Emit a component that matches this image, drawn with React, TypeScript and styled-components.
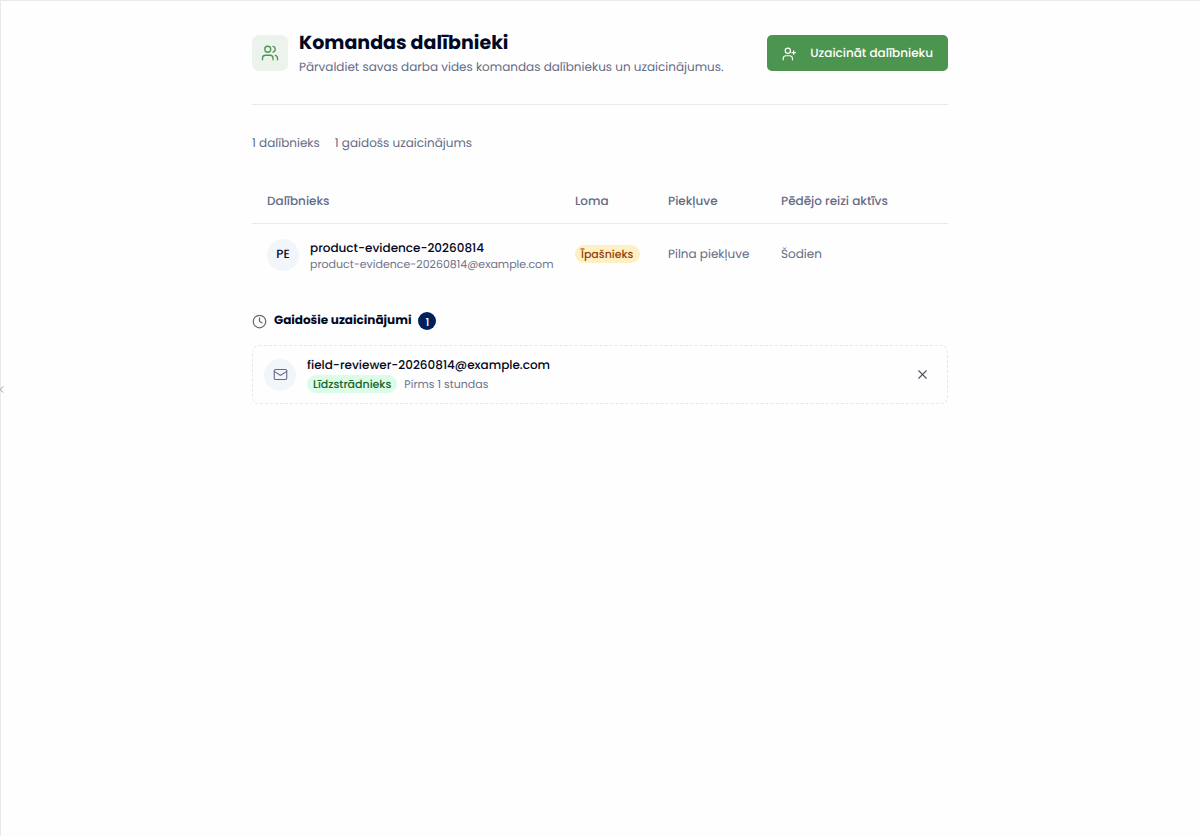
import React from "react";
import styled, { createGlobalStyle } from "styled-components";
import { ChevronLeft, Clock, Mail, Users, X } from "lucide-react";

const GlobalStyle = createGlobalStyle`
  * { box-sizing: border-box; }
  body {
    margin: 0;
    background: #fefefe;
    color: #020824;
    font-family: Poppins, Inter, "Open Sans", sans-serif;
    font-size: 12px;
    line-height: 20px;
    text-rendering: geometricPrecision;
    -webkit-font-smoothing: antialiased;
  }
  button { text-rendering: inherit; }
  h1, h2, p, ul { margin: 0; padding: 0; }
`;

const Shell = styled.div`
  position: relative;
  min-height: 100vh;
  box-shadow: inset 1px 1px 0 #e8e9ec;
`;

const CollapseButton = styled.button`
  position: absolute;
  left: -4px;
  top: 384px;
  display: flex;
  padding: 0;
  border: 0;
  background: none;
  color: #8a8d96;
`;

const Page = styled.main`
  max-width: 696px;
  margin: 0 auto;
  padding-top: 28px;
`;

const Header = styled.header`
  display: flex;
  align-items: center;
  justify-content: space-between;
  gap: 12px;
  padding-bottom: 26px;
  border-bottom: 1px solid #e8e9ec;
`;

const HeaderIntro = styled.div`
  display: flex;
  align-items: center;
  gap: 11px;
`;

const IconTile = styled.div`
  display: grid;
  place-items: center;
  flex: none;
  width: 36px;
  height: 36px;
  border-radius: 7px;
  background: #ebf3ec;
  color: #4c9550;
`;

const Title = styled.h1`
  font-size: 19px;
  line-height: 30px;
  font-weight: 700;
`;

const Subtitle = styled.p`
  line-height: 20px;
  color: #646b85;
`;

const InviteButton = styled.button`
  display: flex;
  align-items: center;
  gap: 14px;
  height: 36px;
  padding: 1px 15px 0;
  border: 0;
  border-radius: 5px;
  background: #4c9550;
  color: #ffffff;
  font: inherit;
  font-weight: 500;
  white-space: nowrap;
`;

const Summary = styled.div`
  display: flex;
  gap: 15px;
  padding: 29px 0 25px;
  color: #646b85;
`;

const Table = styled.table`
  width: 100%;
  border-collapse: collapse;
  table-layout: fixed;
  color: #646b85;
  white-space: nowrap;
`;

const HeadCell = styled.th<{ $width?: string }>`
  width: ${(p) => p.$width ?? "auto"};
  height: 44px;
  padding: 3px 15px 0;
  border-bottom: 1px solid #e8e9ec;
  font-weight: 500;
  text-align: left;
`;

const Cell = styled.td`
  height: 62px;
  padding: 1px 15px 0;
`;

const Member = styled.div`
  display: flex;
  align-items: center;
  gap: 11px;
`;

const Avatar = styled.span`
  display: grid;
  place-items: center;
  flex: none;
  width: 32px;
  height: 32px;
  border-radius: 50%;
  background: #f2f6fa;
  color: #020824;
  font-weight: 500;
`;

const Name = styled.div`
  padding-top: 1px;
  color: #020824;
  font-weight: 500;
  line-height: 18px;
`;

const Small = styled.div`
  color: #6d7389;
  font-size: 11px;
  line-height: 13px;
`;

const Badge = styled.span<{ $tone: "amber" | "green" }>`
  display: inline-block;
  padding: 0 6px;
  border-radius: 9px;
  background: ${(p) => (p.$tone === "amber" ? "#fef0c3" : "#dbfce6")};
  color: ${(p) => (p.$tone === "amber" ? "#963f0c" : "#166432")};
  font-size: 11px;
  font-weight: 500;
  line-height: 18px;
`;

const Pending = styled.section`
  padding-top: 27px;
`;

const PendingHeader = styled.div`
  display: flex;
  align-items: center;
  gap: 7px;
  padding-bottom: 15px;
  color: #646b75;
`;

const PendingTitle = styled.h2`
  color: #020824;
  font-size: 12px;
  line-height: 18px;
  font-weight: 700;
`;

const Count = styled.span`
  display: grid;
  place-items: center;
  width: 18px;
  height: 18px;
  border-radius: 50%;
  background: #001f5f;
  color: #ffffff;
  font-size: 11px;
  font-weight: 500;
`;

const InviteList = styled.ul`
  list-style: none;
`;

const Invite = styled.li`
  display: flex;
  align-items: center;
  gap: 11px;
  height: 59px;
  padding: 0 11px;
  border: 1px dashed #e6e7ea;
  border-radius: 7px;
`;

const InviteBody = styled.div`
  flex: 1;
`;

const InviteMeta = styled.div`
  display: flex;
  align-items: center;
  gap: 7px;
`;

const CancelButton = styled.button`
  display: grid;
  place-items: center;
  width: 28px;
  height: 28px;
  padding: 0;
  border: 0;
  background: none;
  color: #50545e;
`;

const UserPlusIcon = () => (
  <svg width="14" height="14" viewBox="0 0 24 24" fill="none" stroke="currentColor" strokeWidth="2" strokeLinecap="round" strokeLinejoin="round" aria-hidden="true">
    <circle cx="10" cy="6.5" r="4.5" />
    <path d="M2 22v-2a5 5 0 0 1 5-5h6a5 5 0 0 1 5 5v2M20 6.5v6M23 9.5h-6" />
  </svg>
);

export default function App() {
  return (
    <>
      <GlobalStyle />
      <Shell>
        <CollapseButton aria-label="Izvērst sānjoslu">
          <ChevronLeft size={11} />
        </CollapseButton>
        <Page>
          <Header>
            <HeaderIntro>
              <IconTile>
                <Users size={18} strokeWidth={1.75} />
              </IconTile>
              <div>
                <Title>Komandas dalībnieki</Title>
                <Subtitle>Pārvaldiet savas darba vides komandas dalībniekus un uzaicinājumus.</Subtitle>
              </div>
            </HeaderIntro>
            <InviteButton>
              <UserPlusIcon />
              Uzaicināt dalībnieku
            </InviteButton>
          </Header>
          <Summary>
            <span>1 dalībnieks</span>
            <span>1 gaidošs uzaicinājums</span>
          </Summary>
          <Table>
            <thead>
              <tr>
                <HeadCell>Dalībnieks</HeadCell>
                <HeadCell $width="93px">Loma</HeadCell>
                <HeadCell $width="113px">Piekļuve</HeadCell>
                <HeadCell $width="182px">Pēdējo reizi aktīvs</HeadCell>
              </tr>
            </thead>
            <tbody>
              <tr>
                <Cell>
                  <Member>
                    <Avatar>PE</Avatar>
                    <div>
                      <Name>product-evidence-20260814</Name>
                      <Small>product-evidence-20260814@example.com</Small>
                    </div>
                  </Member>
                </Cell>
                <Cell>
                  <Badge $tone="amber">Īpašnieks</Badge>
                </Cell>
                <Cell>Pilna piekļuve</Cell>
                <Cell>Šodien</Cell>
              </tr>
            </tbody>
          </Table>
          <Pending>
            <PendingHeader>
              <Clock size={15} />
              <PendingTitle>Gaidošie uzaicinājumi</PendingTitle>
              <Count>1</Count>
            </PendingHeader>
            <InviteList>
              <Invite>
                <Avatar>
                  <Mail size={15} strokeWidth={1.75} color="#646b85" />
                </Avatar>
                <InviteBody>
                  <Name>field-reviewer-20260814@example.com</Name>
                  <InviteMeta>
                    <Badge $tone="green">Līdzstrādnieks</Badge>
                    <Small>Pirms 1 stundas</Small>
                  </InviteMeta>
                </InviteBody>
                <CancelButton aria-label="Atcelt uzaicinājumu">
                  <X size={15} strokeWidth={1.75} />
                </CancelButton>
              </Invite>
            </InviteList>
          </Pending>
        </Page>
      </Shell>
    </>
  );
}
